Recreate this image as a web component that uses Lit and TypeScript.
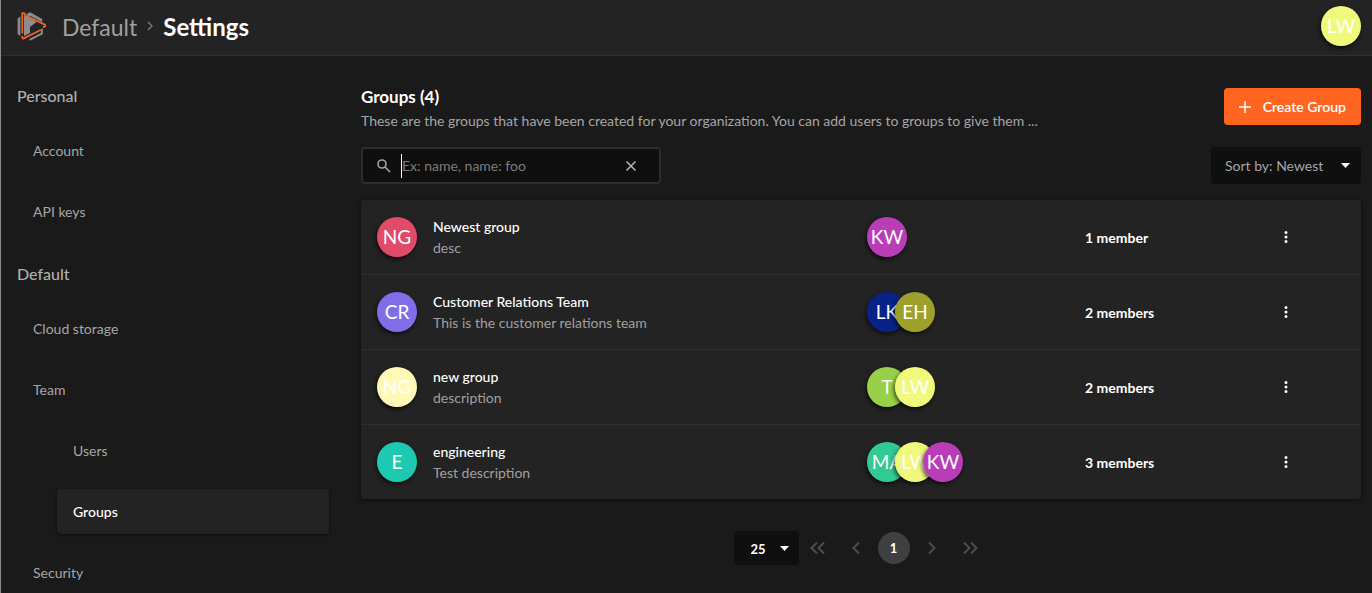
import { LitElement, html, css, svg } from "lit";
import { customElement, property } from "lit/decorators.js";

interface Person { initials: string; color: string; }
interface Group { name: string; desc: string; avatar: Person; members: Person[]; }

const KW = { initials: "KW", color: "#b93db6" };
const LW = { initials: "LW", color: "#f0f97c" };

const groups: Group[] = [
  { name: "Newest group", desc: "desc", avatar: { initials: "NG", color: "#e14b6a" }, members: [KW] },
  { name: "Customer Relations Team", desc: "This is the customer relations team", avatar: { initials: "CR", color: "#7f6ee8" },
    members: [{ initials: "LK", color: "#082287" }, { initials: "EH", color: "#9da02b" }] },
  { name: "new group", desc: "description", avatar: { initials: "NG", color: "#fff9b8" },
    members: [{ initials: "T", color: "#99d049" }, LW] },
  { name: "engineering", desc: "Test description", avatar: { initials: "E", color: "#1ec9b1" },
    members: [{ initials: "MA", color: "#31ca92" }, LW, KW] },
];

const base = css`
  * { box-sizing: border-box; }
  button, input, select { font: inherit; color: inherit; background: none; border: 0; margin: 0; padding: 0; outline: 0; }
  svg { display: block; flex: none; }
`;

@customElement("user-avatar")
class UserAvatar extends LitElement {
  static styles = css`
    :host { display: block; flex: none; border-radius: 50%; box-shadow: -1px 2px 4px rgba(0, 0, 0, 0.7); }
    .disc {
      width: 40px; height: 40px; border-radius: 50%;
      display: flex; align-items: center; justify-content: center;
      font-size: 19px; line-height: 24px; color: #fff; overflow: hidden;
    }
  `;
  @property() initials = "";
  @property() color = "";
  render() {
    return html`<div class="disc" style="background:${this.color}">${this.initials}</div>`;
  }
}

@customElement("side-nav")
class SideNav extends LitElement {
  static styles = [base, css`
    :host { display: block; }
    nav { padding: 0 16px; }
    h2 { margin: 0; padding: 28px 0 20px; font-size: 16px; line-height: 24px; font-weight: 500; color: #b0b0b0; }
    ul { list-style: none; margin: 0; padding: 0; display: flex; flex-direction: column; gap: 16px; }
    .nested { padding-left: 40px; margin-top: 16px; }
    a {
      display: block; padding: 12px 16px; line-height: 21px; border-radius: 4px;
      color: #a6a6a6; text-decoration: none;
    }
    .active { background: #232323; color: #fff; font-weight: 500; box-shadow: 0 1px 3px rgba(0, 0, 0, 0.6); }
  `];
  render() {
    return html`
      <nav aria-label="Settings">
        <h2>Personal</h2>
        <ul>
          <li><a href="#account">Account</a></li>
          <li><a href="#keys">API keys</a></li>
        </ul>
        <h2>Default</h2>
        <ul>
          <li><a href="#storage">Cloud storage</a></li>
          <li>
            <a href="#team">Team</a>
            <ul class="nested">
              <li><a href="#users">Users</a></li>
              <li><a class="active" href="#groups" aria-current="page">Groups</a></li>
            </ul>
          </li>
          <li><a href="#security">Security</a></li>
        </ul>
      </nav>`;
  }
}

@customElement("group-table")
class GroupTable extends LitElement {
  static styles = [base, css`
    :host { display: block; }
    table {
      width: 100%; table-layout: fixed; border-collapse: separate; border-spacing: 0;
      background: #232323; border-radius: 4px; box-shadow: 0 1px 4px rgba(0, 0, 0, 0.6);
    }
    .c-group { width: 49%; }
    .c-people { width: 22%; }
    .c-count { width: 20%; }
    td { height: 75px; padding: 0 16px; border-bottom: 1px solid #303030; }
    tr:last-child td { height: 74px; border-bottom: 0; }
    .group { display: flex; align-items: center; gap: 16px; }
    .name { color: #fff; font-weight: 500; line-height: 21px; }
    .desc { color: #a0a0a0; line-height: 21px; }
    .people { display: flex; }
    .people user-avatar + user-avatar { margin-left: -12px; }
    .count { color: #fff; font-weight: 700; padding-left: 14px; }
    .more { padding: 0; }
    .menu { display: block; width: 30px; height: 24px; fill: #fff; padding: 3px 6px; cursor: pointer; }
  `];
  render() {
    return html`
      <table aria-label="Groups">
        <colgroup><col class="c-group" /><col class="c-people" /><col class="c-count" /><col /></colgroup>
        <tbody>
          ${groups.map((g) => html`
            <tr>
              <td>
                <div class="group">
                  <user-avatar .initials=${g.avatar.initials} .color=${g.avatar.color}></user-avatar>
                  <div>
                    <div class="name">${g.name}</div>
                    <div class="desc">${g.desc}</div>
                  </div>
                </div>
              </td>
              <td>
                <div class="people">
                  ${g.members.map((m) => html`<user-avatar .initials=${m.initials} .color=${m.color}></user-avatar>`)}
                </div>
              </td>
              <td class="count">${g.members.length} ${g.members.length === 1 ? "member" : "members"}</td>
              <td class="more">
                <button class="menu" aria-label="Options">
                  <svg width="18" height="18" viewBox="0 0 24 24"><path d="M12 8a2 2 0 1 0 0-4 2 2 0 0 0 0 4zm0 2a2 2 0 1 0 0 4 2 2 0 0 0 0-4zm0 6a2 2 0 1 0 0 4 2 2 0 0 0 0-4z" /></svg>
                </button>
              </td>
            </tr>`)}
        </tbody>
      </table>`;
  }
}

const chevron = (paths: string[], w = 10) => html`
  <svg width=${w} height="14" viewBox="0 0 ${w} 14" fill="none" stroke="currentColor" stroke-width="2">
    ${paths.map((d) => svg`<path d=${d} />`)}
  </svg>`;

@customElement("page-nav")
class PageNav extends LitElement {
  static styles = [base, css`
    :host { display: flex; justify-content: center; align-items: center; }
    .size { position: relative; }
    select {
      appearance: none; width: 65px; height: 34px; padding: 2px 17px 0; border-radius: 4px;
      background: #0f0f0f; color: #fff; font-size: 13px; font-weight: 700;
    }
    .arrow { position: absolute; right: 10px; top: 15px; fill: #fff; pointer-events: none; }
    button { width: 38px; height: 32px; display: flex; align-items: center; justify-content: center; color: #4d4d4d; }
    .current { width: 32px; border-radius: 50%; background: #404040; color: #fff; font-size: 13px; font-weight: 700; margin: 0 3px; }
  `];
  render() {
    return html`
      <div class="size">
        <select aria-label="Rows per page"><option>25</option><option>50</option></select>
        <svg class="arrow" width="9" height="5" viewBox="0 0 9 5"><path d="M0 0h9L4.500 5z" /></svg>
      </div>
      <button aria-label="First page">${chevron(["M7 1.500 1.500 7 7 12.500", "M14 1.500 8.500 7 14 12.500"], 16)}</button>
      <button aria-label="Previous page">${chevron(["M8 1.500 2.500 7 8 12.500"])}</button>
      <button class="current" aria-label="Page 1" aria-current="page">1</button>
      <button aria-label="Next page">${chevron(["M2 1.500 7.500 7 2 12.500"])}</button>
      <button aria-label="Last page">${chevron(["M2 1.500 7.500 7 2 12.500", "M9 1.500 14.500 7 9 12.500"], 16)}</button>`;
  }
}

@customElement("app-root")
class AppRoot extends LitElement {
  static styles = [base, css`
    :host {
      display: block; height: 100vh; overflow: hidden; background: #1a1a1a; color: #a6a6a6;
      border-left: 1px solid #8a8a8a;
      font-family: Lato, "Open Sans", sans-serif; font-size: 14px; line-height: 21px;
    }
    header {
      display: flex; align-items: center; height: 56px; padding: 0 11px 4px 16px;
      background: #232323; border-bottom: 1px solid #303030;
    }
    .crumbs { display: flex; align-items: center; flex: 1; font-size: 23px; line-height: 32px; padding-top: 2px; margin-left: 15px; }
    .crumbs a { color: #a0a0a0; text-decoration: none; }
    .crumbs svg { margin: 0 10px 2px; }
    h1 { margin: 0; font-size: 24px; line-height: 32px; color: #fff; font-weight: 700; }
    .body { display: grid; grid-template-columns: 344px minmax(0, 1fr); }
    main { padding: 29px 11px 0 16px; }
    .top { display: flex; align-items: flex-start; justify-content: space-between; }
    .intro { width: 660px; }
    h2 { margin: 0; font-size: 17px; line-height: 24px; color: #fff; font-weight: 700; }
    p { margin: 0; line-height: 24px; white-space: nowrap; }
    .create {
      display: flex; align-items: center; gap: 12px; height: 37px; margin-top: 3px; padding: 0 15px;
      background: #ff6420; color: #fff; font-weight: 600; border-radius: 4px; white-space: nowrap;
    }
    .tools { display: flex; justify-content: space-between; align-items: center; margin: 14px 0 16px; }
    .search {
      display: flex; align-items: center; width: 300px; height: 37px; padding: 0 23px 0 14px;
      background: #0f0f0f; border: 2px solid #2d2d2d; border-radius: 4px;
    }
    .search input { flex: 1; min-width: 0; margin-left: 10px; height: 24px; border-left: 1px solid #fff; }
    .search input::placeholder { color: #7c7c7c; opacity: 1; }
    .sort { position: relative; }
    .sort select {
      appearance: none; width: 150px; height: 37px; padding: 0 14px; border-radius: 4px;
      background: #0f0f0f; color: #a6a6a6;
    }
    .arrow { position: absolute; right: 11px; top: 16px; fill: #fff; pointer-events: none; }
    page-nav { margin-top: 32px; }
  `];
  render() {
    return html`
      <header>
        <svg width="30" height="30" viewBox="0 0 30 30" fill="none" aria-label="Home" role="img">
          <path d="M3.400 5.300v20L.6 23V7.800z" fill="#8c8c8c" />
          <path d="M9 3.400 13 1.200 25.200 8v3L13.500 5 11 5z" fill="#8c8c8c" />
          <path d="M7 4.600h3.800L19.500 11l-6.500 5v6L7 25z" fill="#8c8c8c" />
          <path d="M24.800 17.800v4.800L12.600 28.800" stroke="#8c8c8c" stroke-width="2" />
          <path d="M8 6V3.600Q8 2.200 6.600 2.200H5.300V22.500M10.500 5.300 27.600 13.600Q29 14.600 27.600 15.500L26 16.400M23.600 19 6.800 27.400Q5.300 28 5.300 26.200V25" stroke="#f0622a" stroke-width="1.800" />
        </svg>
        <div class="crumbs">
          <a href="#default">Default</a>
          <svg width="6" height="10" viewBox="0 0 6 10" fill="none" stroke="#777" stroke-width="1.500"><path d="M1 1l4 4-4 4" /></svg>
          <h1>Settings</h1>
        </div>
        <user-avatar .initials=${LW.initials} .color=${LW.color}></user-avatar>
      </header>
      <div class="body">
        <side-nav></side-nav>
        <main>
          <div class="top">
            <div class="intro">
              <h2>Groups (4)</h2>
              <p>These are the groups that have been created for your organization. You can add users to groups to give them ...</p>
            </div>
            <button class="create">
              <svg width="12" height="12" viewBox="0 0 12 12" stroke="#fff" stroke-width="1.500"><path d="M6 0v12M0 6h12" /></svg>
              Create Group
            </button>
          </div>
          <div class="tools">
            <div class="search">
              <svg width="14" height="14" viewBox="0 0 14 14" fill="none" stroke="#a6a6a6" stroke-width="1.600"><circle cx="5" cy="5" r="4" /><path d="M8 8l5 5" /></svg>
              <input type="text" aria-label="Search groups" placeholder="Ex: name, name: foo" />
              <button aria-label="Clear search">
                <svg width="10" height="10" viewBox="0 0 10 10" stroke="#b8b8b8" stroke-width="1.500"><path d="M.5.5l9 9M9.500.5l-9 9" /></svg>
              </button>
            </div>
            <div class="sort">
              <select aria-label="Sort groups"><option>Sort by: Newest</option><option>Sort by: Oldest</option></select>
              <svg class="arrow" width="9" height="5" viewBox="0 0 9 5"><path d="M0 0h9L4.500 5z" /></svg>
            </div>
          </div>
          <group-table></group-table>
          <page-nav></page-nav>
        </main>
      </div>`;
  }
}
